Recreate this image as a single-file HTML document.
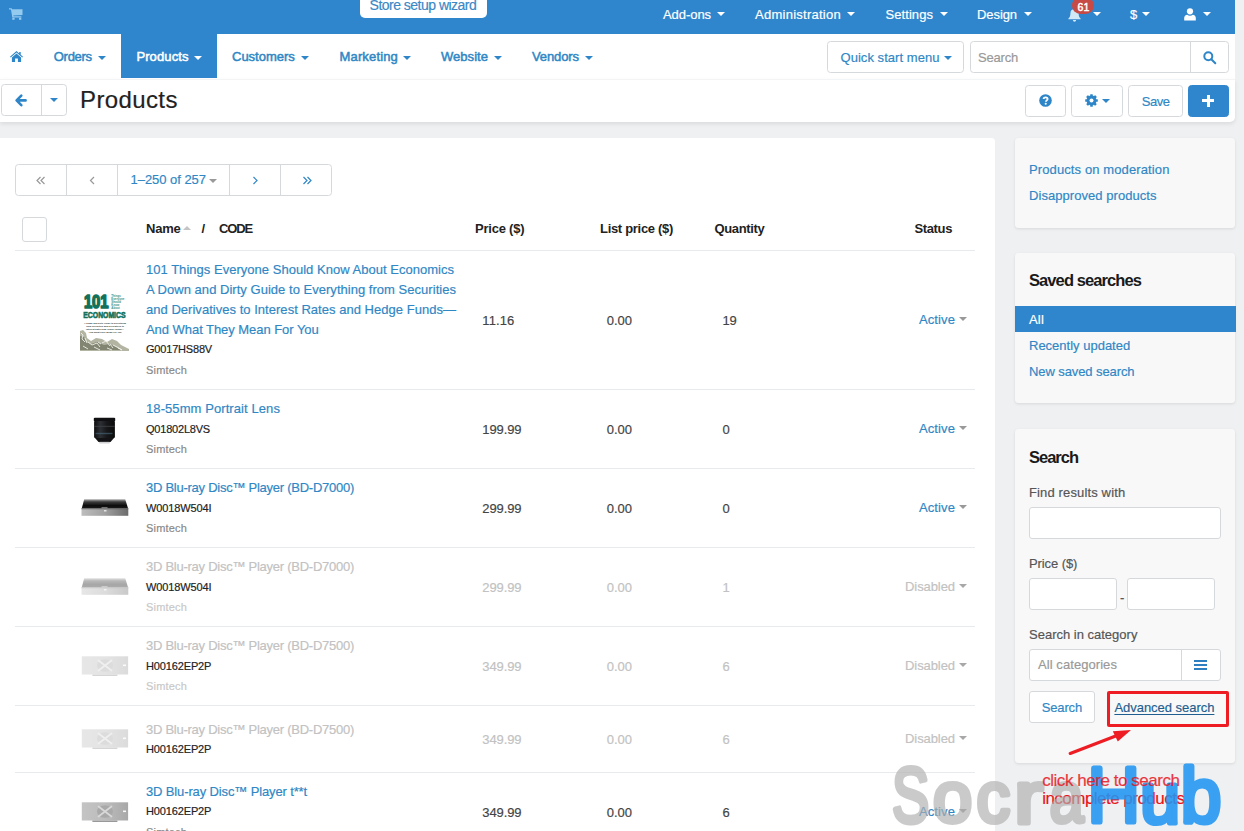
<!DOCTYPE html>
<html lang="en">
<head>
<meta charset="utf-8">
<title>Products</title>
<style>
*{box-sizing:border-box;margin:0;padding:0}
html,body{width:1244px;height:831px;overflow:hidden}
body{background:#eef0f2;font-family:"Liberation Sans",sans-serif;font-size:13px;color:#333;position:relative}
.a{position:absolute}
.t{position:absolute;white-space:nowrap;line-height:1;-webkit-text-stroke:.18px currentColor}
svg{position:absolute;overflow:visible}
.c{position:absolute;width:0;height:0;border-left:4px solid transparent;border-right:4px solid transparent;border-top:4px solid #fff}
.c.b{border-top-color:#2e86c8}
.c.g{border-top-color:#999}
.c.l{border-top-color:#a8a8a8}
.btn{position:absolute;background:#fff;border:1px solid #d6d9dc;border-radius:3.500px}
.panel{position:absolute;left:1015px;width:220px;background:#f8f8f9;border-radius:3.500px;box-shadow:0 1px 3px rgba(0,0,0,.10)}
.hl{position:absolute;left:15px;width:960px;height:1px;background:#e8ebed}
.v{position:absolute;width:1px;background:#d6d9dc}
</style>
</head>
<body>

<!-- top bar -->
<div class="a" style="left:0;top:0;width:1235px;height:34px;background:#3086cc"></div>
<div class="a" style="left:359.5px;top:-8px;width:127.5px;height:25.5px;background:#fff;border-radius:5px"></div>
<i class="c" style="left:717px;top:12px"></i>
<i class="c" style="left:847px;top:12px"></i>
<i class="c" style="left:940px;top:12px"></i>
<i class="c" style="left:1023.5px;top:12px"></i>
<i class="c" style="left:1092.5px;top:12px"></i>
<i class="c" style="left:1142.400px;top:12px"></i>
<i class="c" style="left:1202.5px;top:12px"></i>
<!-- cart -->
<svg style="left:9px;top:8.200px" width="14" height="12" viewBox="0 0 14 12" fill="#a5d8f6" opacity=".85"><path d="M0 .3h2.700l.3 1H13.500v5.700L4.300 7.500l.2 .8h7.900v1.100H3.300L2 1.400H0z"/><rect x="3.300" y="9.700" width="2.300" height="2.100"/><rect x="10" y="9.700" width="2.300" height="2.100"/></svg>
<!-- bell -->
<svg style="left:1067.5px;top:8px" width="13" height="14" viewBox="0 0 13 14" fill="#e3f3fc" opacity=".9"><path d="M6.5 0c.7 0 1.1.5 1.1 1.1 2 .6 3 2.200 3 4.400 0 2.800.9 4 2 4.900v.8H.4v-.8c1.100-.9 2-2.100 2-4.900 0-2.200 1-3.800 3-4.400C5.400.5 5.800 0 6.500 0zM4.900 12h3.200c0 .9-.7 1.700-1.600 1.700S4.900 12.900 4.900 12z"/></svg>
<div class="a" style="left:1072.3px;top:-3px;width:21.7px;height:17px;border-radius:8.5px;background:#c74a45"></div>
<!-- user -->
<svg style="left:1183.5px;top:7.500px" width="12" height="13" viewBox="0 0 12 13" fill="#fff"><circle cx="6" cy="3.300" r="3.100"/><path d="M.2 12.500V9.800c0-1.700 1.300-2.900 3-3.100.8.700 1.700 1 2.800 1s2-.3 2.800-1c1.700.2 3 1.400 3 3.100v2.700z"/></svg>

<!-- nav -->
<div class="a" style="left:0;top:34px;width:1235px;height:45px;background:#fff"></div>
<div class="a" style="left:121px;top:34px;width:95.500px;height:43.700px;background:#3086cc"></div>
<svg style="left:10px;top:50.500px" width="13" height="11" viewBox="0 0 13 11" fill="#2e86c8"><path d="M6.500 0l2.700 2.400V1h1.500v2.700L13 5.700l-.7.800L6.500 1.500.7 6.500 0 5.700zM6.500 2.600l4.600 4V11H7.900V7.600H5.100V11H1.900V6.600z"/></svg>
<i class="c b" style="left:98px;top:55.500px"></i>
<i class="c" style="left:194.300px;top:55.500px"></i>
<i class="c b" style="left:301px;top:55.500px"></i>
<i class="c b" style="left:403px;top:55.500px"></i>
<i class="c b" style="left:494px;top:55.500px"></i>
<i class="c b" style="left:585px;top:55.500px"></i>
<div class="btn" style="left:827px;top:41px;width:137px;height:32px"></div>
<i class="c b" style="left:943.500px;top:56px"></i>
<div class="btn" style="left:970px;top:41px;width:259px;height:32px"></div>
<div class="v" style="left:1190px;top:42px;height:30px"></div>
<svg style="left:1203px;top:51px" width="13" height="13" viewBox="0 0 13 13" fill="none" stroke="#2e86c8" stroke-width="2"><circle cx="5.300" cy="5.300" r="4"/><path d="M8.300 8.300l4 4" stroke-linecap="round"/></svg>

<!-- title bar -->
<div class="a" style="left:0;top:79px;width:1235px;height:43px;background:#fff;border-radius:0 0 5px 0;box-shadow:0 2px 4px rgba(0,0,0,.09)"></div>
<div class="a" style="left:0;top:79px;width:1235px;height:1px;background:#f3f4f5"></div>
<div class="btn" style="left:1px;top:84px;width:66px;height:32px"></div>
<div class="v" style="left:41px;top:85px;height:30px"></div>
<svg style="left:15px;top:94.100px" width="12" height="13" viewBox="0 0 12 13" fill="none" stroke="#2e86c8" stroke-width="2.600" stroke-linecap="round" stroke-linejoin="round"><path d="M6.300 1.600L1.600 6.400l4.700 4.800M2 6.400h8.600"/></svg>
<i class="c b" style="left:50px;top:98px"></i>
<div class="btn" style="left:1025px;top:85px;width:41px;height:32px"></div>
<svg style="left:1039px;top:94.300px" width="13" height="13" viewBox="0 0 13 13"><circle cx="6.500" cy="6.500" r="6.300" fill="#2e86c8"/><path d="M4.600 5.100c0-1.100.9-1.800 2-1.800s2 .7 2 1.700c0 1.300-1.700 1.400-1.700 2.700" fill="none" stroke="#fff" stroke-width="1.800"/><circle cx="6.700" cy="9.800" r="1.050" fill="#fff"/></svg>
<div class="btn" style="left:1071px;top:85px;width:52px;height:32px"></div>
<svg style="left:1084.800px;top:94.300px" width="13" height="13" viewBox="-6.500 -6.500 13 13"><g fill="#2e86c8"><circle r="4.900"/><rect x="-1.300" y="-6.300" width="2.600" height="12.600" rx=".5"/><rect transform="rotate(45)" x="-1.300" y="-6.300" width="2.600" height="12.600" rx=".5"/><rect transform="rotate(90)" x="-1.300" y="-6.300" width="2.600" height="12.600" rx=".5"/><rect transform="rotate(135)" x="-1.300" y="-6.300" width="2.600" height="12.600" rx=".5"/></g><circle r="2" fill="#fff"/></svg>
<i class="c b" style="left:1102.300px;top:98.500px"></i>
<div class="btn" style="left:1128px;top:85px;width:55px;height:32px"></div>
<div class="btn" style="left:1188px;top:85px;width:41px;height:32px;background:#3086cc;border-color:#3086cc"></div>
<div class="a" style="left:1202.300px;top:99.200px;width:12px;height:3px;background:#fff"></div>
<div class="a" style="left:1206.800px;top:94.700px;width:3px;height:12px;background:#fff"></div>

<!-- main panel -->
<div class="a" style="left:0;top:137.600px;width:995px;height:700px;background:#fff;border-radius:0 3.500px 0 0"></div>
<div class="btn" style="left:15px;top:164px;width:317px;height:32px"></div>
<div class="v" style="left:66px;top:165px;height:30px"></div>
<div class="v" style="left:117px;top:165px;height:30px"></div>
<div class="v" style="left:229px;top:165px;height:30px"></div>
<div class="v" style="left:280px;top:165px;height:30px"></div>
<svg style="left:36px;top:176px" width="10" height="9" viewBox="0 0 10 9" fill="none" stroke="#999" stroke-width="1.200"><path d="M4.500 1L1 4.500 4.500 8M8.500 1L5 4.500 8.500 8"/></svg>
<svg style="left:88.500px;top:176px" width="7" height="9" viewBox="0 0 7 9" fill="none" stroke="#999" stroke-width="1.200"><path d="M5 1L1.500 4.500 5 8"/></svg>
<svg style="left:251.500px;top:176px" width="7" height="9" viewBox="0 0 7 9" fill="none" stroke="#2e86c8" stroke-width="1.200"><path d="M1.500 1L5 4.500 1.500 8"/></svg>
<svg style="left:301.500px;top:176px" width="10" height="9" viewBox="0 0 10 9" fill="none" stroke="#2e86c8" stroke-width="1.200"><path d="M1.500 1L5 4.500 1.500 8M5.500 1L9 4.500 5.500 8"/></svg>
<i class="c g" style="left:209.200px;top:178.500px"></i>
<div class="btn" style="left:22px;top:217px;width:25px;height:25px;border-radius:3px"></div>
<svg style="left:183px;top:226px" width="8" height="4" viewBox="0 0 8 4"><path d="M0 4L4 0l4 4z" fill="#c4c4c4"/></svg>
<div class="hl" style="top:250px"></div>
<div class="hl" style="top:389px"></div>
<div class="hl" style="top:468px"></div>
<div class="hl" style="top:547px"></div>
<div class="hl" style="top:626px"></div>
<div class="hl" style="top:705px"></div>
<div class="hl" style="top:772px"></div>
<i class="c g" style="left:959px;top:317px"></i>
<i class="c g" style="left:959px;top:426px"></i>
<i class="c g" style="left:959px;top:505px"></i>
<i class="c l" style="left:959px;top:584px"></i>
<i class="c l" style="left:959px;top:663px"></i>
<i class="c l" style="left:959px;top:736px"></i>
<i class="c g" style="left:959px;top:809px"></i>
<!-- book cover -->
<svg style="left:80px;top:286px" width="50" height="67" viewBox="0 0 50 67" font-family="'Liberation Sans', sans-serif" font-weight="bold">
<rect width="50" height="67" fill="#fff"/>
<text x="3.900" y="22.200" font-size="18.800" textLength="24.600" lengthAdjust="spacingAndGlyphs" fill="#13715a" stroke="#13715a" stroke-width="1.700" stroke-linejoin="round">101</text>
<g font-size="2.900" fill="#3f917b"><text x="31.300" y="10.500">Things</text><text x="31.300" y="13.600">Everyone</text><text x="31.300" y="16.700">Should</text><text x="31.300" y="19.800">Know</text><text x="31.300" y="22.900">About</text></g>
<text x="3.300" y="32.300" font-size="8.600" textLength="42.200" lengthAdjust="spacingAndGlyphs" fill="#13715a" stroke="#13715a" stroke-width=".6">ECONOMICS</text>
<g font-size="2.350" fill="#26423a" text-anchor="middle"><text x="25" y="38.300">A Down and Dirty Guide to Everything</text><text x="25" y="41.100">from Securities and Derivatives to</text><text x="25" y="43.900">Interest Rates and Hedge Funds—</text><text x="25" y="46.700">And What They Mean For You</text></g>
<path d="M0 45l3-1 3 3 1 5 4 3 5-3 6 1 5 3 5-3 5 2 4 4 4 2 4 2v2H0z" fill="#b3b5a2"/>
<path d="M0 50l4 1 2 5 5 2 6-2 7 3 6-1 6 3 5 3H0z" fill="#6d715e" opacity=".7"/>
<path d="M1 47l2 2-1 4 3 3M8 56l4 3 5-2 3 4M22 57l4-2 4 5M33 59l4 2 5 3M3 60l5 3M14 61l6 3M27 62l5 2M5 52l2 5M18 56l3 2M30 58l3 4M38 62l4 2" stroke="#f6f6ee" stroke-width="1" fill="none" opacity=".85"/>
</svg>
<!-- lens -->
<svg style="left:93px;top:417px" width="23" height="29" viewBox="0 0 23 29">
<defs><linearGradient id="lg" x1="0" x2="1"><stop offset="0" stop-color="#0e0e10"/><stop offset=".3" stop-color="#2c2f34"/><stop offset=".6" stop-color="#17181a"/><stop offset="1" stop-color="#0a0a0a"/></linearGradient></defs>
<rect x=".8" y=".8" width="21.400" height="3.600" rx="1" fill="#101012"/>
<rect x="1.100" y="4" width="20.800" height="17" rx="1" fill="url(#lg)"/>
<rect x="1.100" y="8.800" width="20.800" height="1.100" fill="#43464b" opacity=".7"/>
<rect x="2.500" y="15.800" width="17" height="1.400" fill="#4a6a80" opacity=".6"/>
<path d="M2 21h19l-3.500 4h-12z" fill="#131315"/>
<rect x="6" y="24.800" width="11" height="1.600" rx=".8" fill="#b9bcc0" opacity=".7"/>
</svg>
<!-- blu-ray D7000 -->
<svg style="left:80px;top:498px" width="50" height="19" viewBox="0 0 50 19">
<defs><linearGradient id="bt" x1="0" x2="0" y1="0" y2="1"><stop offset="0" stop-color="#b0b0b0"/><stop offset=".3" stop-color="#3c3c3c"/><stop offset=".7" stop-color="#0c0c0c"/><stop offset="1" stop-color="#1a1a1a"/></linearGradient>
<linearGradient id="bf" x1="0" x2="1"><stop offset="0" stop-color="#bdbdbd"/><stop offset=".5" stop-color="#a0a0a0"/><stop offset="1" stop-color="#6c6c6c"/></linearGradient>
</defs>
<g><path d="M4.200 1.200h41L48 10.300H1.800z" fill="url(#bt)"/><rect x="1.500" y="10.300" width="46.800" height="7.500" fill="url(#bf)"/><rect x="1.500" y="10.300" width="46.800" height=".9" fill="#555"/><rect x="21.500" y="9.300" width="6" height="1" fill="#999"/><rect x="24" y="12.200" width="2.500" height="1.200" fill="#f4f4f4"/></g>
</svg>
<svg style="left:80px;top:577px;opacity:.36" width="50" height="19" viewBox="0 0 50 19"><g><path d="M4.200 1.200h41L48 10.300H1.800z" fill="url(#bt)"/><rect x="1.500" y="10.300" width="46.800" height="7.500" fill="url(#bf)"/><rect x="1.500" y="10.300" width="46.800" height=".9" fill="#555"/><rect x="21.500" y="9.300" width="6" height="1" fill="#999"/><rect x="24" y="12.200" width="2.500" height="1.200" fill="#f4f4f4"/></g></svg>
<!-- blu-ray D7500 -->
<svg style="left:80px;top:656px;opacity:.4" width="50" height="21" viewBox="0 0 50 21">
<defs><linearGradient id="sv" x1="0" x2="1"><stop offset="0" stop-color="#c4c4c4"/><stop offset=".5" stop-color="#bcbcbc"/><stop offset="1" stop-color="#a8a8a8"/></linearGradient>
</defs>
<g><rect x="1.800" y=".3" width="46.300" height="18.200" fill="url(#sv)"/><ellipse cx="25" cy="9.500" rx="8" ry="6.300" fill="#a9a9a9"/><path d="M18.500 4.500l13 10M31.500 4.500L18.500 14.500" stroke="#d8d8d8" stroke-width="1.700" stroke-linecap="round"/><rect x="43" y="8.500" width="3" height="1.600" fill="#f6f6f6"/><rect x="12.400" y="18.500" width="25" height="1.500" fill="#999"/></g>
</svg>
<svg style="left:80px;top:728.500px;opacity:.4" width="50" height="21" viewBox="0 0 50 21"><g><rect x="1.800" y=".3" width="46.300" height="18.200" fill="url(#sv)"/><ellipse cx="25" cy="9.500" rx="8" ry="6.300" fill="#a9a9a9"/><path d="M18.500 4.500l13 10M31.500 4.500L18.500 14.500" stroke="#d8d8d8" stroke-width="1.700" stroke-linecap="round"/><rect x="43" y="8.500" width="3" height="1.600" fill="#f6f6f6"/><rect x="12.400" y="18.500" width="25" height="1.500" fill="#999"/></g></svg>
<svg style="left:80px;top:802px" width="50" height="21" viewBox="0 0 50 21"><g><rect x="1.800" y=".3" width="46.300" height="18.200" fill="url(#sv)"/><ellipse cx="25" cy="9.500" rx="8" ry="6.300" fill="#a9a9a9"/><path d="M18.500 4.500l13 10M31.500 4.500L18.500 14.500" stroke="#d8d8d8" stroke-width="1.700" stroke-linecap="round"/><rect x="43" y="8.500" width="3" height="1.600" fill="#f6f6f6"/><rect x="12.400" y="18.500" width="25" height="1.500" fill="#999"/></g></svg>


<!-- sidebar -->
<div class="panel" style="top:138px;height:90px"></div>
<div class="panel" style="top:253px;height:150px"></div>
<div class="a" style="left:1014.5px;top:306px;width:221.5px;height:26px;background:#3086cc"></div>
<div class="panel" style="top:429px;height:334px"></div>
<div class="btn" style="left:1029px;top:507px;width:192px;height:32px;border-radius:3px"></div>
<div class="btn" style="left:1029px;top:578px;width:88px;height:32px;border-radius:3px"></div>
<div class="btn" style="left:1127px;top:578px;width:88px;height:32px;border-radius:3px"></div>
<div class="btn" style="left:1029px;top:649px;width:192px;height:32px;border-radius:3px"></div>
<div class="v" style="left:1181px;top:650px;height:30px"></div>
<div class="a" style="left:1194.300px;top:659.800px;width:12.600px;height:2px;background:#2e7fc0"></div>
<div class="a" style="left:1194.300px;top:663.900px;width:12.600px;height:2px;background:#2e7fc0"></div>
<div class="a" style="left:1194.300px;top:668px;width:12.600px;height:2px;background:#2e7fc0"></div>
<div class="btn" style="left:1029px;top:691px;width:66px;height:31.500px;border-radius:3px"></div>
<div class="a" style="left:1107px;top:690.500px;width:121.500px;height:36.500px;border:3px solid #ee1c23;border-radius:2px"></div>
<svg style="left:0;top:0" width="1244" height="831" viewBox="0 0 1244 831"><path d="M1070.200 753.400L1117 735.600" stroke="#ee1c23" stroke-width="3.200" stroke-linecap="round"/><path d="M1112.800 731.200L1131 730l-13.200 11.400z" fill="#ee1c23"/></svg>

<div class="t" style="left:663.0px;top:8.00px;font-size:13px;color:#fff;letter-spacing:-0.060px;">Add-ons</div>
<div class="t" style="left:755.0px;top:8.00px;font-size:13px;color:#fff;letter-spacing:0.259px;">Administration</div>
<div class="t" style="left:885.5px;top:8.00px;font-size:13px;color:#fff;letter-spacing:0.064px;">Settings</div>
<div class="t" style="left:977.0px;top:8.00px;font-size:13px;color:#fff;letter-spacing:-0.078px;">Design</div>
<div class="t" style="left:1130.0px;top:8.00px;font-size:13px;color:#fff;">$</div>
<div class="t" style="left:369.6px;top:-2.15px;font-size:14px;color:#3a88c6;letter-spacing:-0.514px;">Store setup wizard</div>
<div class="t" style="left:1077.5px;top:2.01px;font-size:10.5px;color:#fff;letter-spacing:0.056px;-webkit-text-stroke:.45px #fff;">61</div>
<div class="t" style="left:53.8px;top:50.00px;font-size:13px;color:#2f87c5;letter-spacing:-0.289px;-webkit-text-stroke:0.5px currentColor;">Orders</div>
<div class="t" style="left:136.4px;top:50.00px;font-size:13px;color:#fff;letter-spacing:0.111px;-webkit-text-stroke:0.5px currentColor;">Products</div>
<div class="t" style="left:232.0px;top:50.00px;font-size:13px;color:#2f87c5;-webkit-text-stroke:0.5px currentColor;">Customers</div>
<div class="t" style="left:339.5px;top:50.00px;font-size:13px;color:#2f87c5;letter-spacing:0.158px;-webkit-text-stroke:0.5px currentColor;">Marketing</div>
<div class="t" style="left:441.0px;top:50.00px;font-size:13px;color:#2f87c5;letter-spacing:0.038px;-webkit-text-stroke:0.5px currentColor;">Website</div>
<div class="t" style="left:532.0px;top:50.00px;font-size:13px;color:#2f87c5;letter-spacing:-0.100px;-webkit-text-stroke:0.5px currentColor;">Vendors</div>
<div class="t" style="left:840.5px;top:51.00px;font-size:13px;color:#2f87c5;letter-spacing:0.046px;">Quick start menu</div>
<div class="t" style="left:978.0px;top:51.00px;font-size:13px;color:#999;letter-spacing:-0.201px;">Search</div>
<div class="t" style="left:80.0px;top:87.68px;font-size:24px;color:#222;letter-spacing:0.385px;">Products</div>
<div class="t" style="left:1141.7px;top:94.50px;font-size:13px;color:#2f87c5;letter-spacing:-0.460px;">Save</div>
<div class="t" style="left:130.5px;top:173.00px;font-size:13px;color:#2f87c5;letter-spacing:-0.034px;">1–250 of 257</div>
<div class="t" style="left:146.0px;top:222.00px;font-size:13px;color:#222;font-weight:bold;-webkit-text-stroke:0;letter-spacing:-0.230px;">Name</div>
<div class="t" style="left:201.5px;top:222.00px;font-size:13px;color:#222;font-weight:bold;-webkit-text-stroke:0;">/</div>
<div class="t" style="left:219.0px;top:222.00px;font-size:13px;color:#222;font-weight:bold;-webkit-text-stroke:0;letter-spacing:-1.141px;">CODE</div>
<div class="t" style="left:475.0px;top:222.00px;font-size:13px;color:#222;font-weight:bold;-webkit-text-stroke:0;letter-spacing:-0.224px;">Price ($)</div>
<div class="t" style="left:600.0px;top:222.00px;font-size:13px;color:#222;font-weight:bold;-webkit-text-stroke:0;letter-spacing:-0.307px;">List price ($)</div>
<div class="t" style="left:714.5px;top:222.00px;font-size:13px;color:#222;font-weight:bold;-webkit-text-stroke:0;letter-spacing:-0.342px;">Quantity</div>
<div class="t" style="left:914.5px;top:222.00px;font-size:13px;color:#222;font-weight:bold;-webkit-text-stroke:0;letter-spacing:-0.372px;">Status</div>
<div class="t" style="left:146.0px;top:263.00px;font-size:13px;color:#2f87c5;letter-spacing:0.023px;">101 Things Everyone Should Know About Economics</div>
<div class="t" style="left:146.0px;top:283.00px;font-size:13px;color:#2f87c5;letter-spacing:0.028px;">A Down and Dirty Guide to Everything from Securities</div>
<div class="t" style="left:146.0px;top:303.00px;font-size:13px;color:#2f87c5;letter-spacing:0.029px;">and Derivatives to Interest Rates and Hedge Funds—</div>
<div class="t" style="left:146.0px;top:323.00px;font-size:13px;color:#2f87c5;letter-spacing:-0.047px;">And What They Mean For You</div>
<div class="t" style="left:146.0px;top:344.19px;font-size:11px;color:#222;letter-spacing:-0.189px;">G0017HS88V</div>
<div class="t" style="left:146.0px;top:365.19px;font-size:11px;color:#888;letter-spacing:0.179px;">Simtech</div>
<div class="t" style="left:482.3px;top:313.50px;font-size:13px;color:#444;letter-spacing:0.084px;">11.16</div>
<div class="t" style="left:606.8px;top:313.50px;font-size:13px;color:#444;letter-spacing:-0.028px;">0.00</div>
<div class="t" style="left:722.5px;top:313.50px;font-size:13px;color:#444;letter-spacing:-0.334px;">19</div>
<div class="t" style="left:919.0px;top:312.50px;font-size:13px;color:#2f87c5;letter-spacing:0.099px;">Active</div>
<div class="t" style="left:146.0px;top:402.00px;font-size:13px;color:#2f87c5;letter-spacing:0.084px;">18-55mm Portrait Lens</div>
<div class="t" style="left:146.0px;top:423.69px;font-size:11px;color:#222;letter-spacing:-0.206px;">Q01802L8VS</div>
<div class="t" style="left:146.0px;top:444.39px;font-size:11px;color:#888;letter-spacing:0.179px;">Simtech</div>
<div class="t" style="left:482.3px;top:422.50px;font-size:13px;color:#444;letter-spacing:-0.094px;">199.99</div>
<div class="t" style="left:606.8px;top:422.50px;font-size:13px;color:#444;letter-spacing:-0.028px;">0.00</div>
<div class="t" style="left:722.5px;top:422.50px;font-size:13px;color:#444;">0</div>
<div class="t" style="left:919.0px;top:421.50px;font-size:13px;color:#2f87c5;letter-spacing:0.099px;">Active</div>
<div class="t" style="left:146.0px;top:481.00px;font-size:13px;color:#2f87c5;letter-spacing:-0.257px;">3D Blu-ray Disc™ Player (BD-D7000)</div>
<div class="t" style="left:146.0px;top:502.69px;font-size:11px;color:#222;letter-spacing:-0.116px;">W0018W504I</div>
<div class="t" style="left:146.0px;top:523.19px;font-size:11px;color:#888;letter-spacing:0.179px;">Simtech</div>
<div class="t" style="left:482.3px;top:501.50px;font-size:13px;color:#444;letter-spacing:-0.094px;">299.99</div>
<div class="t" style="left:606.8px;top:501.50px;font-size:13px;color:#444;letter-spacing:-0.028px;">0.00</div>
<div class="t" style="left:722.5px;top:501.50px;font-size:13px;color:#444;">0</div>
<div class="t" style="left:919.0px;top:500.50px;font-size:13px;color:#2f87c5;letter-spacing:0.099px;">Active</div>
<div class="t" style="left:146.0px;top:560.00px;font-size:13px;color:#c2c2c2;letter-spacing:-0.257px;">3D Blu-ray Disc™ Player (BD-D7000)</div>
<div class="t" style="left:146.0px;top:581.69px;font-size:11px;color:#222;letter-spacing:-0.116px;">W0018W504I</div>
<div class="t" style="left:146.0px;top:602.19px;font-size:11px;color:#c8c8c8;letter-spacing:0.179px;">Simtech</div>
<div class="t" style="left:482.3px;top:580.50px;font-size:13px;color:#c2c2c2;letter-spacing:-0.094px;">299.99</div>
<div class="t" style="left:606.8px;top:580.50px;font-size:13px;color:#c2c2c2;letter-spacing:-0.028px;">0.00</div>
<div class="t" style="left:722.5px;top:580.50px;font-size:13px;color:#c2c2c2;">1</div>
<div class="t" style="left:905.0px;top:579.50px;font-size:13px;color:#c2c2c2;letter-spacing:-0.074px;">Disabled</div>
<div class="t" style="left:146.0px;top:639.00px;font-size:13px;color:#c2c2c2;letter-spacing:-0.257px;">3D Blu-ray Disc™ Player (BD-D7500)</div>
<div class="t" style="left:146.0px;top:660.69px;font-size:11px;color:#222;letter-spacing:-0.137px;">H00162EP2P</div>
<div class="t" style="left:146.0px;top:681.19px;font-size:11px;color:#c8c8c8;letter-spacing:0.179px;">Simtech</div>
<div class="t" style="left:482.3px;top:659.50px;font-size:13px;color:#c2c2c2;letter-spacing:-0.094px;">349.99</div>
<div class="t" style="left:606.8px;top:659.50px;font-size:13px;color:#c2c2c2;letter-spacing:-0.028px;">0.00</div>
<div class="t" style="left:722.5px;top:659.50px;font-size:13px;color:#c2c2c2;">6</div>
<div class="t" style="left:905.0px;top:658.50px;font-size:13px;color:#c2c2c2;letter-spacing:-0.074px;">Disabled</div>
<div class="t" style="left:146.0px;top:722.50px;font-size:13px;color:#c2c2c2;letter-spacing:-0.257px;">3D Blu-ray Disc™ Player (BD-D7500)</div>
<div class="t" style="left:146.0px;top:744.19px;font-size:11px;color:#222;letter-spacing:-0.137px;">H00162EP2P</div>
<div class="t" style="left:482.3px;top:732.50px;font-size:13px;color:#c2c2c2;letter-spacing:-0.094px;">349.99</div>
<div class="t" style="left:606.8px;top:732.50px;font-size:13px;color:#c2c2c2;letter-spacing:-0.028px;">0.00</div>
<div class="t" style="left:722.5px;top:732.50px;font-size:13px;color:#c2c2c2;">6</div>
<div class="t" style="left:905.0px;top:731.50px;font-size:13px;color:#c2c2c2;letter-spacing:-0.074px;">Disabled</div>
<div class="t" style="left:146.0px;top:784.50px;font-size:13px;color:#2f87c5;letter-spacing:-0.133px;">3D Blu-ray Disc™ Player t**t</div>
<div class="t" style="left:146.0px;top:806.19px;font-size:11px;color:#222;letter-spacing:-0.137px;">H00162EP2P</div>
<div class="t" style="left:146.0px;top:826.69px;font-size:11px;color:#888;letter-spacing:0.179px;">Simtech</div>
<div class="t" style="left:482.3px;top:805.50px;font-size:13px;color:#444;letter-spacing:-0.094px;">349.99</div>
<div class="t" style="left:606.8px;top:805.50px;font-size:13px;color:#444;letter-spacing:-0.028px;">0.00</div>
<div class="t" style="left:722.5px;top:805.50px;font-size:13px;color:#444;">6</div>
<div class="t" style="left:919.0px;top:804.50px;font-size:13px;color:#2f87c5;letter-spacing:0.099px;">Active</div>
<div class="t" style="left:1029.0px;top:163.00px;font-size:13px;color:#2f87c5;letter-spacing:0.112px;">Products on moderation</div>
<div class="t" style="left:1029.0px;top:189.00px;font-size:13px;color:#2f87c5;letter-spacing:0.052px;">Disapproved products</div>
<div class="t" style="left:1029.0px;top:272.33px;font-size:16.5px;color:#1a1a1a;font-weight:bold;-webkit-text-stroke:0;letter-spacing:-0.912px;">Saved searches</div>
<div class="t" style="left:1029.0px;top:313.00px;font-size:13px;color:#fff;letter-spacing:0.182px;">All</div>
<div class="t" style="left:1029.0px;top:339.00px;font-size:13px;color:#2f87c5;">Recently updated</div>
<div class="t" style="left:1029.0px;top:365.00px;font-size:13px;color:#2f87c5;letter-spacing:-0.091px;">New saved search</div>
<div class="t" style="left:1029.0px;top:448.83px;font-size:16.5px;color:#1a1a1a;font-weight:bold;-webkit-text-stroke:0;letter-spacing:-1.008px;">Search</div>
<div class="t" style="left:1029.0px;top:485.50px;font-size:13px;color:#555;letter-spacing:0.140px;">Find results with</div>
<div class="t" style="left:1029.0px;top:557.00px;font-size:13px;color:#555;letter-spacing:-0.092px;">Price ($)</div>
<div class="t" style="left:1120.0px;top:591.00px;font-size:13px;color:#555;">-</div>
<div class="t" style="left:1029.0px;top:627.60px;font-size:13px;color:#555;">Search in category</div>
<div class="t" style="left:1038.0px;top:657.70px;font-size:13px;color:#999;letter-spacing:0.068px;">All categories</div>
<div class="t" style="left:1041.8px;top:700.60px;font-size:13px;color:#2f87c5;letter-spacing:-0.167px;">Search</div>
<div class="t" style="left:1114.4px;top:700.60px;font-size:13px;color:#1f5f8f;letter-spacing:-0.030px;text-decoration:underline;text-underline-offset:1.5px;">Advanced search</div>
<div class="t" style="left:1042.2px;top:789.61px;font-size:17px;color:#e8131b;letter-spacing:-0.523px;">incomplete products</div>

<!-- watermark -->
<svg style="left:0;top:0" width="1244" height="831" viewBox="0 0 1244 831" font-family="'Liberation Sans', sans-serif" stroke-linejoin="round" stroke-linecap="round" stroke-width="5">
<g opacity=".66" fill="#b0b0b0" stroke="#b0b0b0"><text><tspan x="892.0" y="822.2" font-size="78.7" textLength="37.19" lengthAdjust="spacingAndGlyphs">S</tspan><tspan x="933.0" y="822.3" font-size="72.1" textLength="39.21" lengthAdjust="spacingAndGlyphs">o</tspan><tspan x="976.5" y="822.3" font-size="72.1" textLength="33.63" lengthAdjust="spacingAndGlyphs">c</tspan><tspan x="1014.2" y="823.0" font-size="73.4" textLength="28.77" lengthAdjust="spacingAndGlyphs">r</tspan><tspan x="1049.7" y="822.3" font-size="72.1" textLength="33.77" lengthAdjust="spacingAndGlyphs">a</tspan></text></g><g opacity=".88" fill="#2196f3" stroke="#2196f3"><text><tspan x="1087.5" y="822.0" font-size="77.3" textLength="52.48" lengthAdjust="spacingAndGlyphs">H</tspan><tspan x="1140.3" y="822.7" font-size="72.7" textLength="39.79" lengthAdjust="spacingAndGlyphs">u</tspan><tspan x="1180.7" y="822.7" font-size="78.4" textLength="40.68" lengthAdjust="spacingAndGlyphs">b</tspan></text></g>
</svg>
<div class="t" style="left:1042.2px;top:772.31px;font-size:17px;color:#e8131b;letter-spacing:-0.458px;opacity:.85;">click here to search</div>

</body>
</html>
